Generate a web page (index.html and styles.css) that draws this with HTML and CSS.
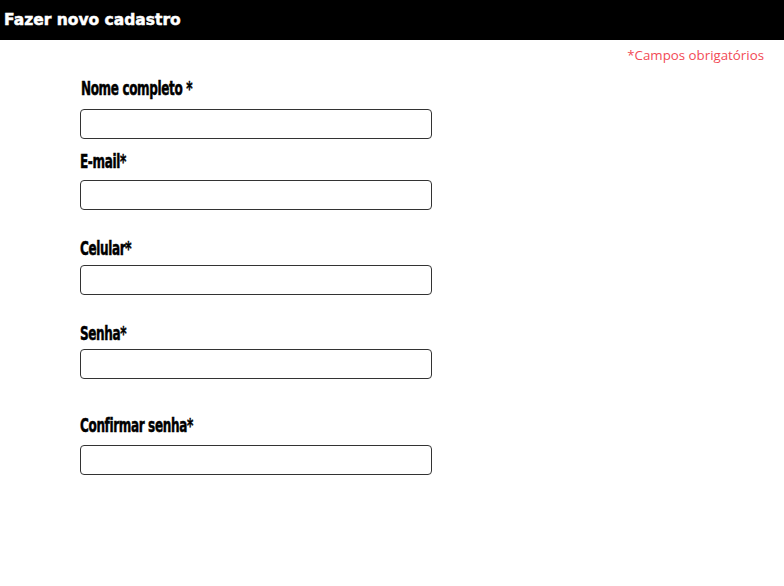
FILE: index.html
```html
<!DOCTYPE html>
<html lang="pt-BR">
<head>
<meta charset="utf-8">
<title>Fazer novo cadastro</title>
<link rel="stylesheet" href="styles.css">
</head>
<body>
<header class="topbar">
  <h1 class="title">Fazer novo cadastro</h1>
</header>
<p class="required">*Campos obrigatórios</p>
<form class="form">
  <div class="field f1">
    <label class="label" for="nome">Nome completo *</label>
    <input class="input" id="nome" type="text">
  </div>
  <div class="field f2">
    <label class="label" for="email">E-mail*</label>
    <input class="input" id="email" type="email">
  </div>
  <div class="field f3">
    <label class="label" for="cel">Celular*</label>
    <input class="input" id="cel" type="tel">
  </div>
  <div class="field f4">
    <label class="label" for="senha">Senha*</label>
    <input class="input" id="senha" type="password">
  </div>
  <div class="field f5">
    <label class="label" for="conf">Confirmar senha*</label>
    <input class="input" id="conf" type="password">
  </div>
</form>
</body>
</html>
```

FILE: styles.css
```css
html, body {
  margin: 0;
  padding: 0;
  background: #ffffff;
}
.topbar {
  height: 40px;
  background: #000000;
  display: flex;
  align-items: center;
  padding-left: 4px;
}
.title {
  margin: 0;
  color: #ffffff;
  font-family: "DejaVu Sans", sans-serif;
  font-weight: bold;
  font-size: 15.5px;
  line-height: 20px;
  -webkit-text-stroke: 0.5px #ffffff;
}
.required {
  margin: 6px 0 0 0;
  padding-right: 20px;
  text-align: right;
  font-family: "Open Sans", sans-serif;
  font-size: 13.3px;
  line-height: 18px;
  color: #f24a55;
}
.form {
  padding-left: 80px;
  margin: 14px 0 0 0;
  display: flex;
  flex-direction: column;
}
.field {
  display: flex;
  flex-direction: column;
  align-items: flex-start;
}
.label {
  display: inline-block;
  font-family: "DejaVu Sans", sans-serif;
  font-weight: bold;
  font-size: 19px;
  line-height: 20px;
  letter-spacing: -0.6px;
  color: #000000;
  transform: scaleX(0.635);
  transform-origin: left center;
  -webkit-text-stroke: 0.5px #000000;
}
.f1 .label { margin-left: 1px; }
.input {
  box-sizing: border-box;
  width: 352px;
  height: 30px;
  border: 1px solid #333333;
  border-radius: 4px;
  margin: 0;
  padding: 0 6px;
  background: #ffffff;
}
.f1 .input { margin-top: 11px; }
.f2 { margin-top: 12px; }
.f2 .input { margin-top: 9px; }
.f3 { margin-top: 28px; }
.f3 .input { margin-top: 7px; }
.f4 { margin-top: 28px; }
.f4 .input { margin-top: 6px; }
.f5 { margin-top: 36px; }
.f5 .input { margin-top: 10px; }
```
